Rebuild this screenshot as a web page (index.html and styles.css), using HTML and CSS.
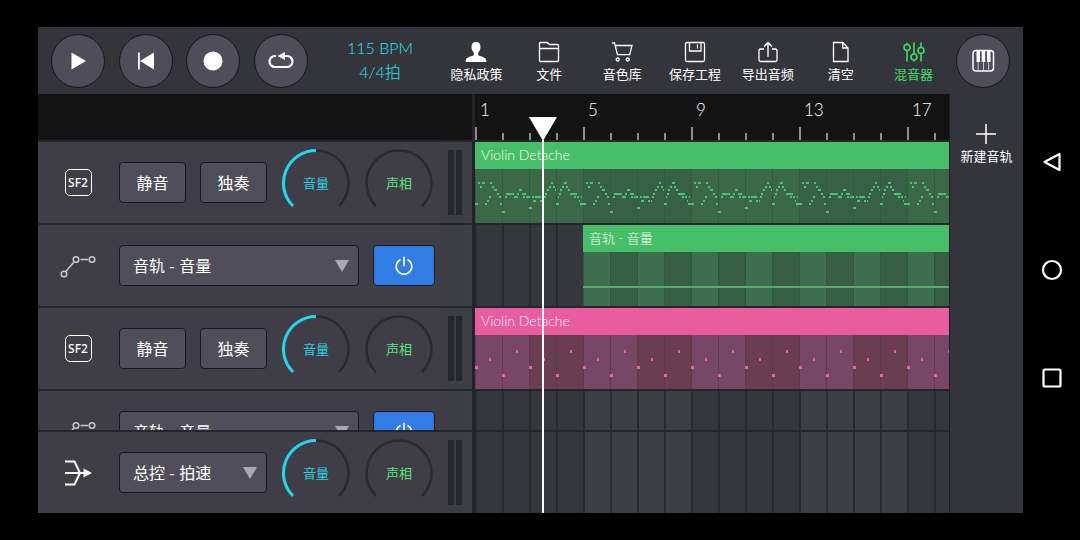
FILE: index.html
```html
<!DOCTYPE html>
<html lang="zh-CN">
<head>
<meta charset="utf-8">
<title>音轨编辑器</title>
<link rel="stylesheet" href="styles.css">
</head>
<body>
<svg class="defs" aria-hidden="true">
  <symbol id="nodes" viewBox="0 0 36 24"><g fill="none" stroke="#c9c9ce" stroke-width="1.500"><circle cx="4" cy="20" r="2.800"/><circle cx="16" cy="5.500" r="2.800"/><circle cx="32" cy="5.500" r="2.800"/><path d="M5.800 17.500 14 8M20.500 5.500h7.500"/></g></symbol>
  <symbol id="power" viewBox="0 0 20 20"><g fill="none" stroke="#fff" stroke-width="1.600"><path d="M6.500 3.500a7.800 7.800 0 1 0 7 0M10 .8v9.400"/></g></symbol>
  <symbol id="knob-volume" viewBox="0 0 70 70"><g fill="none" stroke-width="2.500"><path stroke="#2a292f" d="M35 2.500A32.500 32.500 0 0 1 58 58"/><path stroke="#22d6ee" stroke-width="3" d="M12 58A32.500 32.500 0 0 1 35 2.500"/></g></symbol>
  <symbol id="knob-pan" viewBox="0 0 70 70"><path fill="none" stroke="#2a292f" stroke-width="2.500" d="M12 58A32.500 32.500 0 1 1 58 58"/></symbol>
</svg>

<div class="app">
  <header class="topbar">
    <div class="transport">
      <button class="round" aria-label="播放"><svg viewBox="0 0 28 28"><path fill="#fff" d="M7.500 5.500 22 14 7.500 22.500z"/></svg></button>
      <button class="round" aria-label="回到开头"><svg viewBox="0 0 28 28"><path fill="#fff" d="M6 5.500h1.800V22.500H6zM22 5.500v17L8 14z"/></svg></button>
      <button class="round" aria-label="录音"><svg viewBox="0 0 28 28"><circle cx="14" cy="14" r="9.500" fill="#fff"/></svg></button>
      <button class="round" aria-label="循环"><svg viewBox="0 0 28 28"><path fill="none" stroke="#fff" stroke-width="2.200" d="M9 9H8a5.500 5.500 0 0 0 0 11h12a5.500 5.500 0 0 0 0-11h-3"/><path fill="#fff" d="M10.500 9 18 5v8z"/></svg></button>
    </div>
    <div class="tempo"><span>115 BPM</span><span>4/4拍</span></div>
    <nav class="menu">
      <button class="menu-item"><svg viewBox="0 0 22 22"><path fill="#fff" d="M11 1c3 0 4.500 2 4.500 4.800 0 2.700-1 4.700-2.300 5.700v2.500c1 1.500 7.800 1.500 8.100 5.500v1.500H.7v-1.500c.3-4 7.100-4 8.100-5.500v-2.500C7.500 10.500 6.500 8.500 6.500 5.800 6.500 3 8 1 11 1z"/></svg><span>隐私政策</span></button>
      <button class="menu-item"><svg viewBox="0 0 22 22"><path class="line" d="M1.500 2.500a1 1 0 0 1 1-1h6.500l2.500 2h8a1 1 0 0 1 1 1v15a1 1 0 0 1-1 1h-17a1 1 0 0 1-1-1zM1.500 7.500h19"/></svg><span>文件</span></button>
      <button class="menu-item"><svg viewBox="0 0 22 22"><path class="line" d="M1 2h2.500l3 11.700h12.200L21 4.500H4.200"/><circle class="line" cx="6.700" cy="18.500" r="1.500"/><circle class="line" cx="16.700" cy="18.500" r="1.500"/></svg><span>音色库</span></button>
      <button class="menu-item"><svg viewBox="0 0 22 22"><rect class="line" x="1.500" y="1.500" width="19" height="19" rx="1.500"/><path class="line" d="M5.500 1.500v8.500h11.500V1.500M13.500 3.500v4"/></svg><span>保存工程</span></button>
      <button class="menu-item"><svg viewBox="0 0 22 22"><path class="line" d="M7 8H3.500a1.500 1.500 0 0 0-1.500 1.500V19a1.500 1.500 0 0 0 1.500 1.500h15A1.500 1.500 0 0 0 20 19V9.500A1.500 1.500 0 0 0 18.500 8H15M11 16V1.500M7 5.500l4-4 4 4"/></svg><span>导出音频</span></button>
      <button class="menu-item"><svg viewBox="0 0 22 22"><path class="line" d="M3.500 1.500h9.200l5.300 5.500v13.500H3.500zM12.700 1.500V7H18"/></svg><span>清空</span></button>
      <button class="menu-item active"><svg viewBox="0 0 22 22"><g class="line"><path d="M4 1.500v2M4 9.500v11M11 1.500v11.500M11 19v1.500M18 1.500v5M18 12.500v8"/><circle cx="4" cy="6.500" r="3"/><circle cx="11" cy="16" r="3"/><circle cx="18" cy="9.500" r="3"/></g></svg><span>混音器</span></button>
    </nav>
    <div class="piano">
      <button class="round" aria-label="键盘"><svg viewBox="0 0 28 28"><rect x="4" y="3.500" width="20.500" height="20.500" rx="3" fill="none" stroke="#fff" stroke-width="1.500"/><path fill="#fff" d="M7.500 4h3.500v11H7.500zM12.700 4h3.500v11h-3.500zM18 4h3.500v11H18z"/><path stroke="#c8c8d0" d="M9.200 15v9M14.500 15v9M19.700 15v9"/></svg></button>
    </div>
  </header>

  <div class="main">
    <main class="workspace">
      <div class="row ruler-row">
        <div class="ruler-head"></div>
        <div class="ruler"><span>1</span><span>5</span><span>9</span><span>13</span><span>17</span></div>
      </div>

      <div class="tracks">
        <section class="row">
          <div class="head">
            <div class="icon"><span class="sf2">SF2</span></div>
            <button class="btn">静音</button>
            <button class="btn">独奏</button>
            <div class="knob volume"><svg><use href="#knob-volume"/></svg><span>音量</span></div>
            <div class="knob pan"><svg><use href="#knob-pan"/></svg><span>声相</span></div>
            <div class="meter"><i></i><i></i></div>
          </div>
          <div class="lane">
            <article class="clip green">
              <h2>Violin Detache</h2>
              <svg class="notes">
                <defs><pattern id="melody" width="108" height="54" patternUnits="userSpaceOnUse">
                  <path fill="none" stroke="#4fc374" stroke-width="2" d="M3 14h2M7 14h3M15 14h2M5 18h2M17 18h2M19 21h3M22 25h2M24 28h2M14 28h2M12 32h2M0 35h3M10 35h2M25 35h2M27 43h3M30 28h2M31 25h3M34 25h5M39 28h2M41 28h2M42 25h2M44 21h3M47 25h4M48 28h2M51 28h4M54 39h3M57 28h2M58 32h3M60 28h2M62 28h4M65 32h2M68 32h1M69 28h2M70 25h2M72 21h2M74 18h2M76 14h2M78 18h2M80 21h1M81 35h3M83 28h1M84 25h2M85 21h2M87 18h2M89 14h3M91 18h2M93 21h2M95 25h2M97 25h4M99 28h2M101 25h1M102 28h2M104 32h1M106 28h1M105 35h3"/>
                </pattern></defs>
                <rect width="100%" height="54" fill="url(#melody)"/>
              </svg>
            </article>
          </div>
        </section>

        <section class="row">
          <div class="head">
            <div class="icon"><svg width="36" height="24"><use href="#nodes"/></svg></div>
            <div class="select wide"><select aria-label="自动化参数"><option>音轨 - 音量</option></select></div>
            <button class="btn power" aria-label="启用"><svg width="20" height="20"><use href="#power"/></svg></button>
          </div>
          <div class="lane">
            <article class="clip automation">
              <h2>音轨 - 音量</h2>
              <div class="curve"></div>
            </article>
          </div>
        </section>

        <section class="row">
          <div class="head">
            <div class="icon"><span class="sf2">SF2</span></div>
            <button class="btn">静音</button>
            <button class="btn">独奏</button>
            <div class="knob volume"><svg><use href="#knob-volume"/></svg><span>音量</span></div>
            <div class="knob pan"><svg><use href="#knob-pan"/></svg><span>声相</span></div>
            <div class="meter"><i></i><i></i></div>
          </div>
          <div class="lane">
            <article class="clip pink">
              <h2>Violin Detache</h2>
              <svg class="notes">
                <defs><pattern id="bass" width="54" height="54" patternUnits="userSpaceOnUse">
                  <path fill="none" stroke="#ea629f" stroke-width="3" d="M0 32.500h3M14 24.500h2M27 40.500h3M41 16.500h2"/>
                </pattern></defs>
                <rect width="100%" height="54" fill="url(#bass)"/>
              </svg>
            </article>
          </div>
        </section>

        <section class="row">
          <div class="head">
            <div class="icon"><svg width="36" height="24"><use href="#nodes"/></svg></div>
            <div class="select wide"><select aria-label="自动化参数"><option>音轨 - 音量</option></select></div>
            <button class="btn power" aria-label="启用"><svg width="20" height="20"><use href="#power"/></svg></button>
          </div>
          <div class="lane"></div>
        </section>
      </div>

      <section class="row master">
        <div class="head">
          <div class="icon"><svg width="28" height="28" viewBox="0 0 28 28"><path fill="none" stroke="#fff" stroke-width="2" d="M1 2.500h9.500L16 14l-5.500 11.500H1M1 14h20"/><path fill="#fff" d="M19.500 9.500 28 14l-8.500 4.500z"/></svg></div>
          <div class="select"><select aria-label="总控参数"><option>总控 - 拍速</option></select></div>
          <div class="knob volume"><svg><use href="#knob-volume"/></svg><span>音量</span></div>
          <div class="knob pan"><svg><use href="#knob-pan"/></svg><span>声相</span></div>
          <div class="meter"><i></i><i></i></div>
        </div>
        <div class="lane"></div>
      </section>

      <div class="playhead"></div>
    </main>

    <aside class="side">
      <button class="menu-item"><svg viewBox="0 0 22 22"><path stroke="#fff" stroke-width="1.500" d="M11 1v20M1 11h20"/></svg><span>新建音轨</span></button>
    </aside>
  </div>
</div>

<nav class="system">
  <button aria-label="返回"><svg viewBox="0 0 22 22"><path fill="none" stroke="#fff" stroke-width="2.200" stroke-linejoin="round" d="M18.500 3v16L3.500 11z"/></svg></button>
  <button aria-label="主页"><svg viewBox="0 0 22 22"><circle cx="11" cy="11" r="9" fill="none" stroke="#fff" stroke-width="2.200"/></svg></button>
  <button aria-label="最近任务"><svg viewBox="0 0 22 22"><rect x="2.500" y="2.500" width="17" height="17" rx="1.500" fill="none" stroke="#fff" stroke-width="2.200"/></svg></button>
</nav>
</body>
</html>
```

FILE: styles.css
```css
* { box-sizing: border-box; }

body {
  margin: 0;
  height: 100vh;
  display: grid;
  grid-template-columns: 1fr 57px;
  background: #000;
  color: #fff;
  font-family: Lato, "Noto Sans CJK SC", sans-serif;
  font-weight: 400;
  overflow: hidden;
}

button, select { font: inherit; color: inherit; padding: 0; margin: 0; border: 0; background: none; }
svg { display: block; }
.defs { position: absolute; width: 0; height: 0; }

.app {
  display: flex;
  flex-direction: column;
  min-width: 0;
  min-height: 0;
  margin: 27px 0 27px 38px;
  background: #34353a;
}

/* Top bar */
.topbar { display: flex; align-items: center; height: 67px; flex: none; }
.transport { display: flex; justify-content: space-between; width: 257px; margin-left: 13px; }
.round {
  width: 54px;
  height: 54px;
  border-radius: 50%;
  border: 1px solid #14131a;
  background: #4e4d58;
  display: grid;
  place-items: center;
}
.round svg { width: 28px; height: 28px; }
.tempo {
  display: flex;
  flex-direction: column;
  align-items: center;
  width: 120px;
  margin-left: 12px;
  padding-bottom: 1px;
  font-size: 16px;
  font-weight: 300;
  line-height: 24px;
  color: #2ae2f6;
}
.menu { flex: 1; display: grid; grid-template-columns: repeat(7, 1fr); }
.menu-item {
  display: flex;
  flex-direction: column;
  align-items: center;
  gap: 2px;
  padding-top: 3px;
  font-size: 13px;
  line-height: 18px;
  white-space: nowrap;
}
.menu-item svg { width: 22px; height: 22px; }
.line { fill: none; stroke: #fff; stroke-width: 1.3; }
.active { color: #3fdc68; }
.active .line { stroke: #3fdc68; stroke-width: 1.6; }
.piano { width: 73px; padding-left: 6px; }

/* Workspace */
.main { flex: 1; display: flex; min-height: 0; }
.workspace {
  position: relative;
  flex: 1;
  display: flex;
  flex-direction: column;
  min-width: 0;
  border-right: 1px solid #1c1c22;
}
.row { display: flex; flex: none; border-bottom: 2px solid #25252c; }
.ruler-row { height: 48px; background: #131314; }
.ruler-head { width: 437px; border-right: 3px solid #24232b; }
.ruler {
  flex: 1;
  display: flex;
  overflow: hidden;
  font-size: 17px;
  line-height: 20px;
  font-weight: 300;
  background:
    repeating-linear-gradient(90deg, #8e8e8e 0 2px, transparent 2px 108px) 0 100% / 100% 13px no-repeat,
    repeating-linear-gradient(90deg, #8e8e8e 0 2px, transparent 2px 27px) 0 100% / 100% 7px no-repeat;
}
.ruler span { flex: none; width: 108px; padding: 6px 0 0 5px; }

.tracks { flex: 1; min-height: 0; overflow: hidden; }
.head {
  flex: none;
  display: flex;
  align-items: center;
  gap: 14px;
  width: 437px;
  height: 81px;
  border-right: 3px solid #22232a;
  background: linear-gradient(90deg, #3f3d46 0 400px, #3c3f44 430px);
}
.icon { display: grid; place-items: center; width: 67px; padding-left: 13px; }
.sf2 {
  width: 27px;
  height: 27px;
  border: 1px solid #fff;
  border-radius: 5px;
  font: 500 12px/25px "Noto Sans", sans-serif;
  text-align: center;
}
.btn {
  width: 67px;
  height: 41px;
  border: 1px solid #18171e;
  border-radius: 4px;
  background: #504f59;
  font-size: 16px;
  line-height: 24px;
}
.power { width: 62px; background: #317de3; display: grid; place-items: center; }
.select { position: relative; width: 148px; }
.wide { width: 240px; }
.select select {
  appearance: none;
  display: block;
  width: 100%;
  height: 41px;
  padding-left: 13px;
  border: 1px solid #18171e;
  border-radius: 4px;
  background: #504f59;
  font-size: 16px;
}
.select::after {
  content: "";
  position: absolute;
  right: 10px;
  top: 15px;
  width: 14px;
  height: 12px;
  background: #aaa9af;
  clip-path: polygon(0 0, 100% 0, 50% 100%);
  pointer-events: none;
}
.knob { display: grid; place-items: center; width: 70px; height: 70px; font-size: 13px; }
.knob > * { grid-area: 1 / 1; }
.knob svg { width: 70px; height: 70px; }
.knob.pan { margin-left: -1px; }
.volume { color: #2bd0e2; }
.pan { color: #5be27c; }
.meter { display: flex; gap: 2px; height: 65px; }
.meter i { width: 6px; background: #26272c; }

/* Timeline lanes */
.lane {
  flex: 1;
  min-width: 0;
  overflow: hidden;
  background:
    repeating-linear-gradient(90deg, #272a30 0 2px, transparent 2px 27px),
    repeating-linear-gradient(90deg, #34373c 0 108px, #3b3f44 108px 216px);
}
.clip { height: 81px; }
.clip h2 {
  margin: 0;
  height: 27px;
  padding-left: 6px;
  font-size: 14px;
  line-height: 26px;
  font-weight: 300;
  white-space: nowrap;
}
.notes { width: 100%; height: 54px; }
.green {
  background:
    repeating-linear-gradient(90deg, #305b3e 0 1px, transparent 1px 27px),
    repeating-linear-gradient(90deg, #3b6948 0 108px, #376145 108px 216px);
}
.green h2, .automation h2 { background: #47bf68; color: #f2fcf4; }
.automation {
  margin-left: 108px;
  background:
    repeating-linear-gradient(90deg, #2c583a 0 1px, transparent 1px 27px),
    repeating-linear-gradient(90deg, #3f6e4e 0 27px, #375f43 27px 54px);
}
.automation h2 { font-size: 13px; }
.curve { height: 36px; border-bottom: 2px solid #5aaa70; }
.pink {
  background:
    repeating-linear-gradient(90deg, #5d3850 0 1px, transparent 1px 27px),
    repeating-linear-gradient(90deg, #774865 0 54px, #693f4f 54px 108px);
}
.pink h2 { background: #ea5ca0; color: #fff0f7; }

.master { border-top: 2px solid #25252c; border-bottom: 0; }

.playhead {
  position: absolute;
  left: 504px;
  top: 46px;
  bottom: 0;
  width: 2px;
  background: #fff;
}
.playhead::before {
  content: "";
  position: absolute;
  left: -13px;
  top: -23px;
  width: 28px;
  height: 24px;
  background: #fff;
  clip-path: polygon(0 0, 100% 0, 50% 100%);
}

.side { width: 73px; display: flex; flex-direction: column; align-items: center; padding-top: 26px; }

/* System navigation */
.system { display: flex; flex-direction: column; justify-content: center; align-items: center; }
.system button { width: 57px; height: 108px; display: grid; place-items: center; }
.system svg { width: 22px; height: 22px; }
```
